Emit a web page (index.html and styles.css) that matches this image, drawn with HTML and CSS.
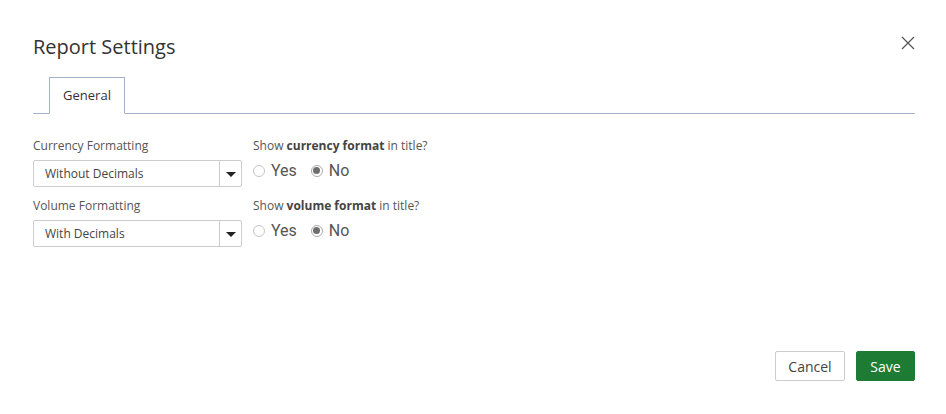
FILE: index.html
```html
<!DOCTYPE html>
<html>
<head>
    <meta charset="utf-8">
    <link rel="stylesheet" href="styles.css">
</head>
<body>
    <div class="modal">
      <div class="modal-header">
        <h2 class="modal-title">Report Settings</h2>
        <button class="close-btn" aria-label="Close">
          <svg width="14" height="14" viewBox="0 0 14 14"><path d="M1 1 L13 13 M13 1 L1 13" stroke="#555" stroke-width="1.2" fill="none"/></svg>
        </button>
      </div>
      <div class="tabs">
        <div class="tab active">General</div>
      </div>
      <div class="form">
        <div class="row">
          <div class="field">
            <label class="label">Currency Formatting</label>
            <div class="select">
              <span class="select-value">Without Decimals</span>
              <span class="select-arrow"></span>
            </div>
          </div>
          <div class="field">
            <label class="label">Show <b>currency format</b> in title?</label>
            <div class="radios">
              <span class="radio"><span class="dot"></span>Yes</span>
              <span class="radio"><span class="dot checked"></span>No</span>
            </div>
          </div>
        </div>
        <div class="row">
          <div class="field">
            <label class="label">Volume Formatting</label>
            <div class="select">
              <span class="select-value">With Decimals</span>
              <span class="select-arrow"></span>
            </div>
          </div>
          <div class="field">
            <label class="label">Show <b>volume format</b> in title?</label>
            <div class="radios">
              <span class="radio"><span class="dot"></span>Yes</span>
              <span class="radio"><span class="dot checked"></span>No</span>
            </div>
          </div>
        </div>
      </div>
      <div class="footer">
        <button class="btn btn-cancel">Cancel</button>
        <button class="btn btn-save">Save</button>
      </div>
    </div>
</body>
</html>
```

FILE: styles.css
```css
* {
margin: 0;
padding: 0;
box-sizing: border-box;
font-family: "Open Sans", sans-serif;
}

body {
background: #ffffff;
color: #333333;
}

.modal {
width: 946px;
height: 414px;
padding: 0 31px 0 33px;
display: flex;
flex-direction: column;
}

.modal-header {
display: flex;
justify-content: space-between;
align-items: center;
padding-top: 31px;
height: 62px;
}

.modal-title {
font-size: 20px;
font-weight: normal;
color: #333333;
line-height: 27px;
margin-top: -1px;
}

.close-btn {
border: none;
background: transparent;
width: 14px;
height: 14px;
margin-top: -7px;
cursor: pointer;
display: flex;
}

.tabs {
margin-top: 15px;
display: flex;
border-bottom: 1px solid #a4b1c6;
padding-left: 16px;
}

.tab {
width: 76px;
height: 37px;
margin-bottom: -1px;
border: 1px solid #a4b1c6;
border-bottom: 1px solid #ffffff;
background: #ffffff;
font-size: 13px;
color: #333333;
text-align: center;
line-height: 35px;
}

.form {
padding-top: 23px;
}

.row {
display: flex;
margin-bottom: 10px;
}

.field {
width: 220px;
}

.field + .field {
width: auto;
}

.label {
display: block;
font-size: 12px;
color: #555555;
line-height: 17px;
margin-bottom: 6px;
}

.label b {
font-weight: bold;
color: #444444;
}

.select {
width: 209px;
height: 27px;
border: 1px solid #cccccc;
border-radius: 2px;
display: flex;
align-items: center;
}

.select-value {
flex: 1;
font-size: 12px;
color: #444444;
padding-left: 11px;
}

.select-arrow {
width: 22px;
height: 100%;
border-left: 1px solid #cccccc;
position: relative;
}

.select-arrow::after {
content: '';
position: absolute;
left: 6px;
top: 11px;
border-left: 5px solid transparent;
border-right: 5px solid transparent;
border-top: 5px solid #222222;
}

.radios {
display: flex;
align-items: center;
height: 21px;
}

.radio {
display: flex;
align-items: center;
font-family: Roboto, sans-serif;
font-size: 16px;
color: #555555;
margin-right: 14px;
}

.dot {
width: 12px;
height: 12px;
border: 1px solid #c4c4c4;
border-radius: 50%;
margin-right: 6px;
position: relative;
}

.dot.checked {
border-color: #aaaaaa;
}

.dot.checked::after {
content: '';
position: absolute;
left: 1.5px;
top: 1.5px;
width: 7px;
height: 7px;
border-radius: 50%;
background: #6e6e6e;
}

.footer {
margin-top: auto;
margin-bottom: 33px;
display: flex;
justify-content: flex-end;
gap: 11px;
}

.btn {
height: 30px;
font-size: 14px;
border-radius: 2px;
cursor: pointer;
}

.btn-cancel {
width: 70px;
background: #ffffff;
border: 1px solid #cccccc;
color: #444444;
}

.btn-save {
width: 59px;
background: #1e7b34;
border: 1px solid #1e7b34;
color: #ffffff;
}
```
